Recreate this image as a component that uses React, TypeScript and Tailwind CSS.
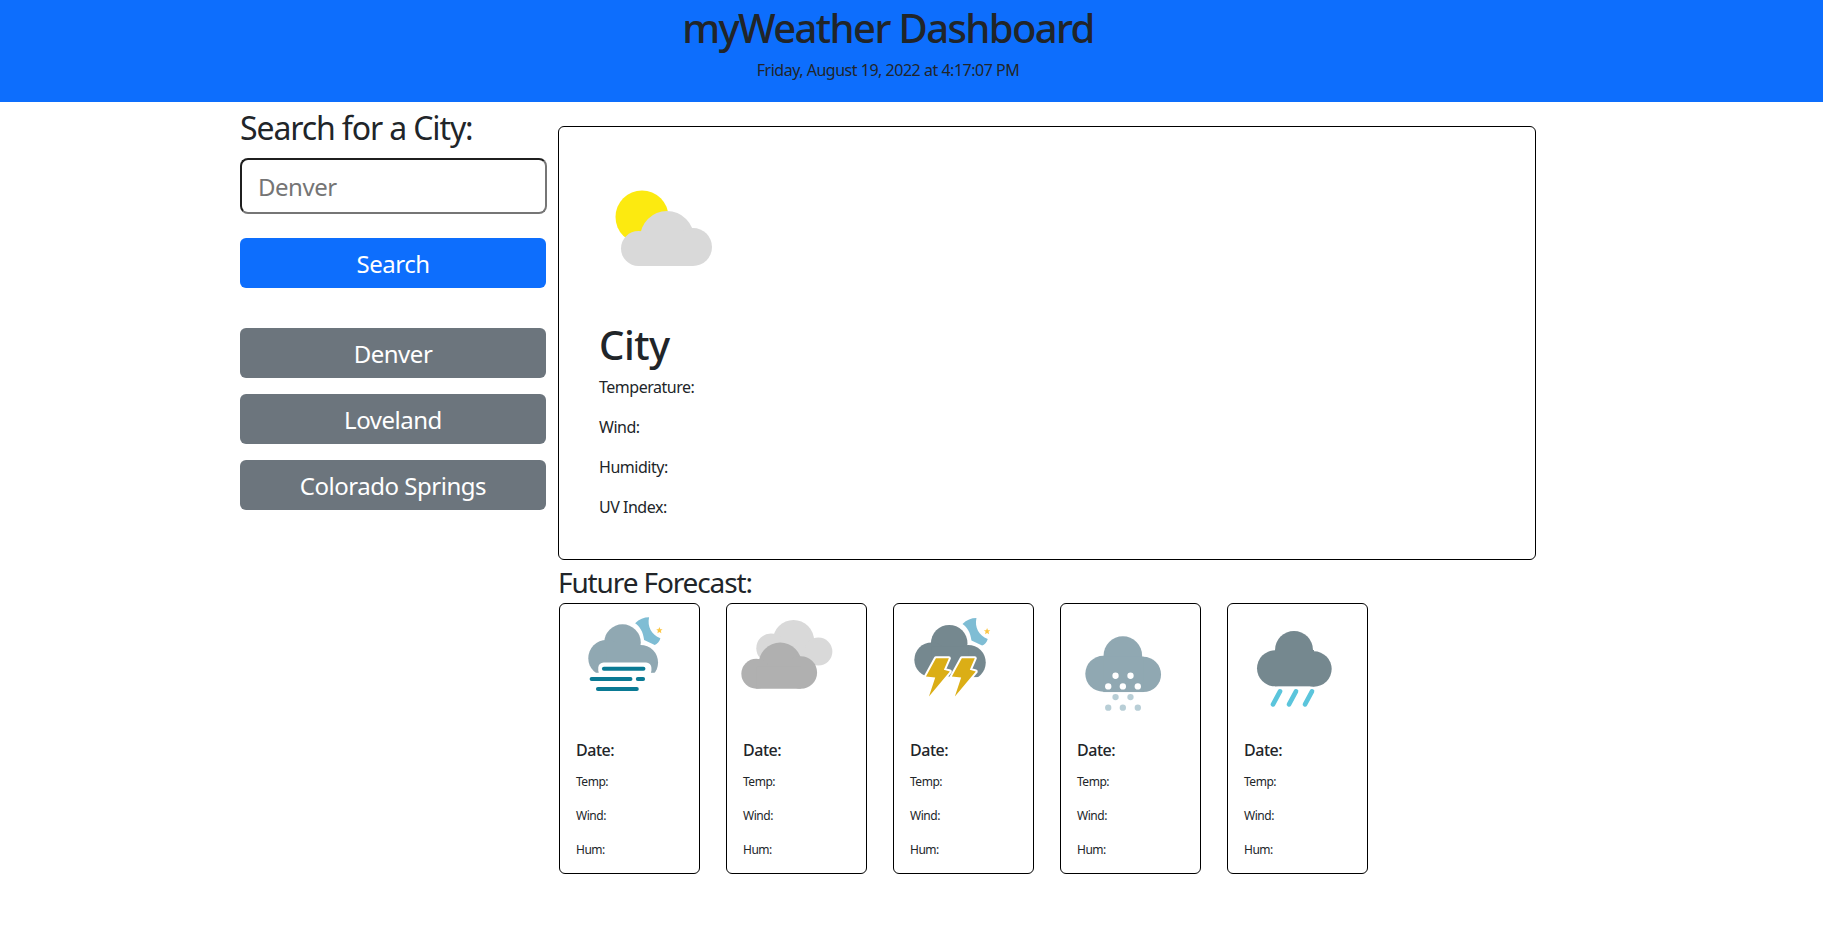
const font = "font-['Noto_Sans',sans-serif] tracking-[-0.03em]"

function Star({ x, y }: { x: number; y: number }) {
  return (
    <polygon
      transform={`translate(${x} ${y})`}
      fill="#fcc644"
      points="0,-10 2.8,-3.2 9.5,-3 4.4,1.6 6,9 0,5 -6,9 -4.4,1.6 -9.5,-3 -2.8,-3.2"
    />
  )
}

function Moon({ dx = 0, dy = 0 }: { dx?: number; dy?: number }) {
  return (
    <path
      transform={`translate(${dx} ${dy})`}
      fill="#7fbdd4"
      d="M298 82C292 110 305 135 332 145C330 155 322 162 315 165L283 150C280 125 270 110 256 100C268 88 283 82 298 82Z"
    />
  )
}

function IconBox({ viewBox, children }: { viewBox: string; children: React.ReactNode }) {
  return (
    <svg className="ml-4 mt-[6px] block h-[100px] w-[100px] overflow-visible" viewBox={viewBox}>
      {children}
    </svg>
  )
}

function FogIcon() {
  return (
    <IconBox viewBox="78 60 301 301">
      <g fill="#90a8b2">
        <circle cx="218" cy="158" r="55" />
        <circle cx="170" cy="205" r="55" />
        <circle cx="272" cy="218" r="53" />
        <rect x="170" y="160" width="100" height="90" />
      </g>
      <rect x="145" y="218" width="160" height="40" rx="16" fill="#fff" />
      <rect x="100" y="249" width="240" height="70" fill="#fff" />
      <Moon />
      <Star x={329} y={121} />
      <g stroke="#0a7a94" strokeWidth="12" strokeLinecap="round">
        <path d="M162 237H281" />
        <path d="M125 268H242" />
        <path d="M264 268H280" />
        <path d="M144 298H261" />
      </g>
    </IconBox>
  )
}

function CloudsIcon() {
  return (
    <IconBox viewBox="581 60 301 301">
      <g fill="#d9d9d9">
        <circle cx="733" cy="152" r="62" />
        <circle cx="665" cy="175" r="44" />
        <circle cx="808" cy="185" r="42" />
      </g>
      <g fill="#b0b0b0">
        <circle cx="693" cy="223" r="65" />
        <circle cx="621" cy="252" r="45" />
        <circle cx="755" cy="248" r="49" />
        <rect x="621" y="230" width="134" height="67" />
      </g>
    </IconBox>
  )
}

function StormIcon() {
  const bolt = "168,205 207,205 192,240 210,245 147,320 166,263 138,260"
  return (
    <IconBox viewBox="90 60 301 301">
      <g fill="#75888f">
        <circle cx="208" cy="160" r="55" />
        <circle cx="155" cy="210" r="52" />
        <circle cx="265" cy="218" r="53" />
        <rect x="155" y="170" width="110" height="90" />
      </g>
      <rect x="100" y="262" width="240" height="70" fill="#fff" />
      <Moon dx={-8} dy={2} />
      <Star x={322} y={124} />
      <g fill="#dbae16" stroke="#fff" strokeWidth="12" strokeLinejoin="round" paintOrder="stroke">
        <polygon points={bolt} />
        <polygon points={bolt} transform="translate(78 0)" />
      </g>
    </IconBox>
  )
}

function SnowIcon() {
  return (
    <IconBox viewBox="593 60 301 301">
      <g fill="#90a8b2">
        <circle cx="731" cy="197" r="58" />
        <circle cx="672" cy="252" r="54" />
        <circle cx="793" cy="254" r="53" />
        <rect x="672" y="200" width="121" height="107" />
      </g>
      <g fill="#fff">
        <circle cx="709" cy="258" r="9.5" />
        <circle cx="754" cy="258" r="9.5" />
        <circle cx="687" cy="290" r="9.5" />
        <circle cx="731" cy="290" r="9.5" />
        <circle cx="776" cy="290" r="9.5" />
      </g>
      <g fill="#b8ced6">
        <circle cx="709" cy="322" r="9.5" />
        <circle cx="754" cy="322" r="9.5" />
        <circle cx="687" cy="354" r="9.5" />
        <circle cx="731" cy="354" r="9.5" />
        <circle cx="776" cy="354" r="9.5" />
      </g>
    </IconBox>
  )
}

function RainIcon() {
  return (
    <IconBox viewBox="132 60 300 300">
      <g fill="#75888f">
        <circle cx="282" cy="180" r="57" />
        <circle cx="225" cy="235" r="54" />
        <circle cx="342" cy="237" r="53" />
        <rect x="225" y="180" width="117" height="109" />
      </g>
      <g stroke="#5bc5dc" strokeWidth="14" strokeLinecap="round">
        <path d="M240 304L219 343" />
        <path d="M288 304L267 343" />
        <path d="M336 304L315 343" />
      </g>
    </IconBox>
  )
}

function ForecastCard({ icon }: { icon: React.ReactNode }) {
  return (
    <div className="h-[271px] w-[141px] rounded-md border border-black">
      {icon}
      <div className="px-4 pt-[31px]">
        <h5 className="text-[16px] leading-[19px] font-medium">Date:</h5>
        <p className="mt-[13px] mb-4 text-[12px] leading-[18px]">Temp:</p>
        <p className="mb-4 text-[12px] leading-[18px]">Wind:</p>
        <p className="text-[12px] leading-[18px]">Hum:</p>
      </div>
    </div>
  )
}

function CityButton({ name }: { name: string }) {
  return (
    <button className="h-[50px] w-[306px] rounded-md bg-[#6c757d] pt-[2px] text-[24px] text-white">{name}</button>
  )
}

export default function App() {
  return (
    <div className={`min-h-[950px] bg-white text-[#212529] ${font}`}>
      <header className="h-[102px] bg-[#0d6efd]">
        <div className="w-[1776px] pt-[4px] text-center">
          <h1 className="mb-[6px] text-[40px] leading-[48px] font-medium tracking-[-0.04em]">myWeather Dashboard</h1>
          <p className="text-[16px] leading-[24px]">Friday, August 19, 2022 at 4:17:07 PM</p>
        </div>
      </header>

      <div className="ml-[228px] flex w-[1320px] gap-[12px] px-[12px]">
        <aside className="w-[306px] shrink-0">
          <h4 className="mt-[7px] text-[32px] leading-[38px] tracking-[-0.035em]">Search for a City:</h4>
          <input
            className="mt-[11px] block h-[56px] w-[307px] rounded-lg border-2 border-t-[#1f1f1f] border-r-[#767676] border-b-[#767676] border-l-[#1f1f1f] px-4 text-[24px] placeholder:text-[#757575]"
            placeholder="Denver"
          />
          <button className="mt-[24px] h-[50px] w-[306px] rounded-md bg-[#0d6efd] pt-[2px] text-[24px] text-white">
            Search
          </button>
          <div className="mt-[40px] flex flex-col gap-[16px]">
            <CityButton name="Denver" />
            <CityButton name="Loveland" />
            <CityButton name="Colorado Springs" />
          </div>
        </aside>

        <main className="w-[978px]">
          <section className="mt-[24px] h-[434px] rounded-md border border-black px-[40px] pt-[43px]">
            <svg className="block h-[120px] w-[120px]" viewBox="599 170 120 120">
              <circle cx="642" cy="217" r="26.5" fill="#fcea10" />
              <g fill="#d9d9d9">
                <circle cx="667" cy="238" r="27" />
                <circle cx="638.5" cy="248.5" r="17.5" />
                <circle cx="693" cy="247" r="19" />
                <rect x="638" y="238" width="55" height="28" />
              </g>
            </svg>
            <h2 className="mt-[31px] text-[40px] leading-[48px] font-medium">City</h2>
            <p className="mt-[6px] mb-4 text-[16px] leading-[24px]">Temperature:</p>
            <p className="mb-4 text-[16px] leading-[24px]">Wind:</p>
            <p className="mb-4 text-[16px] leading-[24px]">Humidity:</p>
            <p className="text-[16px] leading-[24px]">UV Index:</p>
          </section>
          <h4 className="mt-[5px] text-[28px] leading-[34px] tracking-[-0.04em]">Future Forecast:</h4>
          <div className="mt-[4px] ml-px flex gap-[26px]">
            <ForecastCard icon={<FogIcon />} />
            <ForecastCard icon={<CloudsIcon />} />
            <ForecastCard icon={<StormIcon />} />
            <ForecastCard icon={<SnowIcon />} />
            <ForecastCard icon={<RainIcon />} />
          </div>
        </main>
      </div>
    </div>
  )
}
